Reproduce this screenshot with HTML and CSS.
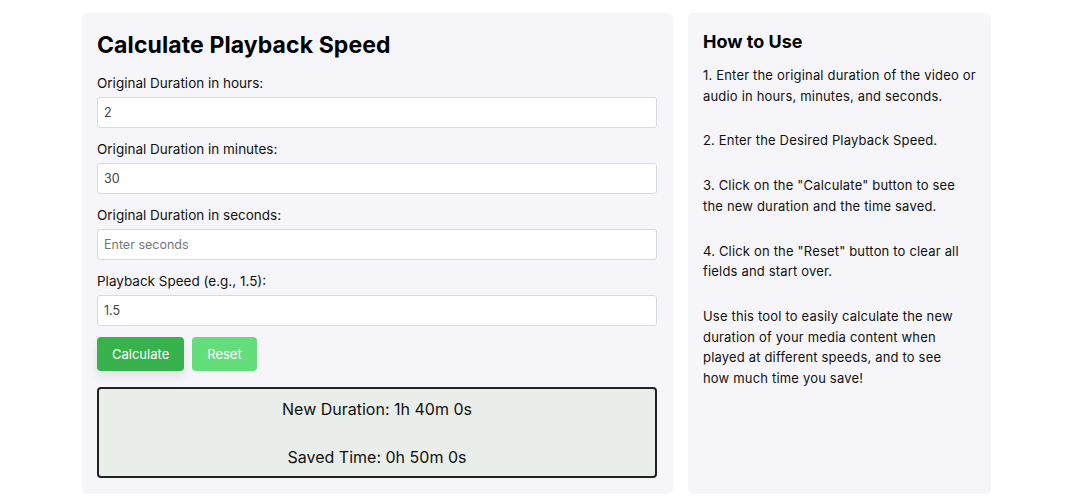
FILE: index.html
```html
<!DOCTYPE html>
<html lang="en">
<head>
<meta charset="utf-8">
<title>Calculate Playback Speed</title>
<link rel="stylesheet" href="styles.css">
</head>
<body>
<div class="page">
  <section class="card calc">
    <h1 class="title">Calculate Playback Speed</h1>
    <div class="field">
      <label class="label" for="h">Original Duration in hours:</label>
      <input class="input" id="h" type="text" value="2">
    </div>
    <div class="field">
      <label class="label" for="m">Original Duration in minutes:</label>
      <input class="input" id="m" type="text" value="30">
    </div>
    <div class="field">
      <label class="label" for="s">Original Duration in seconds:</label>
      <input class="input" id="s" type="text" placeholder="Enter seconds">
    </div>
    <div class="field">
      <label class="label" for="p">Playback Speed (e.g., 1.5):</label>
      <input class="input" id="p" type="text" value="1.5">
    </div>
    <div class="buttons">
      <button class="btn btn-calc">Calculate</button>
      <button class="btn btn-reset">Reset</button>
    </div>
    <div class="result">
      <p class="result-line">New Duration: 1h 40m 0s</p>
      <p class="result-line">Saved Time: 0h 50m 0s</p>
    </div>
  </section>
  <aside class="card help">
    <h2 class="help-title">How to Use</h2>
    <p class="help-text">1. Enter the original duration of the video or<br>audio in hours, minutes, and seconds.</p>
    <p class="help-text">2. Enter the Desired Playback Speed.</p>
    <p class="help-text">3. Click on the "Calculate" button to see<br>the new duration and the time saved.</p>
    <p class="help-text">4. Click on the "Reset" button to clear all<br>fields and start over.</p>
    <p class="help-text">Use this tool to easily calculate the new<br>duration of your media content when<br>played at different speeds, and to see<br>how much time you save!</p>
  </aside>
</div>
</body>
</html>
```

FILE: styles.css
```css
* { box-sizing: border-box; }
body {
  margin: 0;
  background: #ffffff;
  font-family: "Inter", "Noto Sans", sans-serif;
  color: #111;
  height: 498px;
  overflow: hidden;
}
.page {
  display: flex;
  gap: 15px;
  padding: 13px 0 0 82px;
  align-items: stretch;
  height: 494px;
}
.card {
  background: #f6f6fa;
  border-radius: 5px;
}
.calc {
  width: 591px;
  padding: 18px 16px 15px 15px;
}
.help {
  width: 303px;
  padding: 18px 15px 15px 15px;
}
.title {
  margin: 0 0 14px;
  font-size: 23px;
  line-height: 28px;
  font-weight: 700;
  letter-spacing: 0.1px;
  color: #000;
}
.field {
  display: flex;
  flex-direction: column;
  margin-bottom: 11px;
}
.label {
  font-size: 13.5px;
  line-height: 21px;
  margin-bottom: 3px;
  color: #111;
}
.input {
  height: 31px;
  border: 1px solid #d6dbe1;
  border-radius: 3px;
  background: #fff;
  padding: 0 6px;
  font-family: inherit;
  font-size: 12.5px;
  color: #444;
}
.input::placeholder { color: #777; }
.buttons {
  display: flex;
  gap: 8px;
  margin-top: 1px;
}
.btn {
  height: 34px;
  border: none;
  border-radius: 4px;
  color: #fff;
  font-family: inherit;
  font-size: 13px;
  padding: 0 15px;
}
.btn-calc {
  background: #38b24c;
  box-shadow: 0 6px 10px rgba(0,0,0,0.08);
}
.btn-reset {
  background: #64de7a;
}
.result {
  margin-top: 16px;
  height: 91px;
  border: 2px solid #222;
  border-radius: 4px;
  background: #e9eeea;
  padding: 8px 0 7px;
  display: flex;
  flex-direction: column;
  gap: 24px;
  align-items: center;
}
.result-line {
  margin: 0;
  font-size: 16px;
  line-height: 24px;
  color: #111;
}
.help-title {
  margin: 0 0 12px;
  font-size: 18px;
  line-height: 22px;
  font-weight: 700;
  color: #000;
}
.help-text {
  margin: 0 0 24px;
  font-size: 13px;
  line-height: 20.7px;
  letter-spacing: 0.18px;
  white-space: nowrap;
  color: #111;
}
```
